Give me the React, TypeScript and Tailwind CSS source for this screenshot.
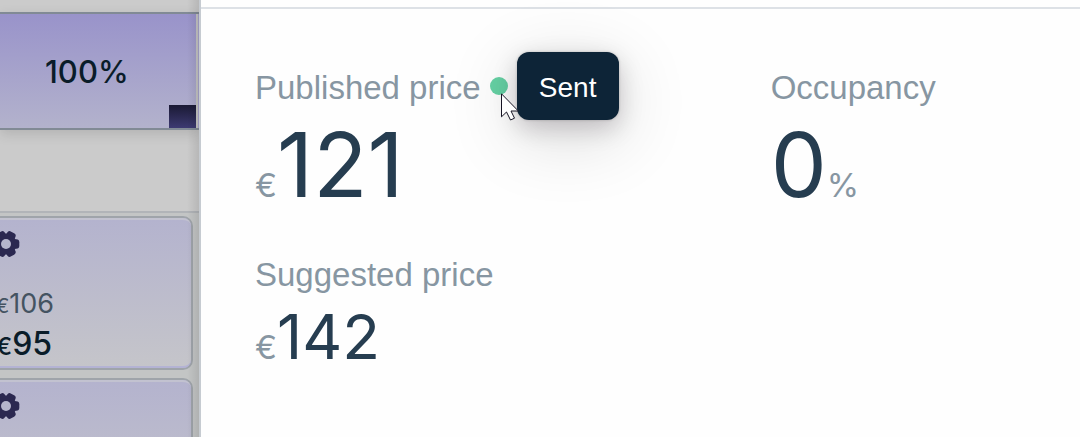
import React from "react";

const LOBES = [0, 60, 120, 180, 240, 300];

function GearIcon() {
  return (
    <svg viewBox="-14 -14 28 28" className="size-7 text-[#2b2850]" aria-hidden="true">
      <g fill="currentColor">
        {LOBES.map((angle) => (
          <rect key={angle} x="3" y="-4.7" width="10.3" height="9.4" rx="3" transform={`rotate(${angle})`} />
        ))}
        <circle r="10.6" />
      </g>
      <circle r="5" className="fill-[#b5b5cc]" />
    </svg>
  );
}

function RateCard({ previous, current }: { previous?: number; current?: number }) {
  return (
    <article className="-ml-5 mr-1.5 h-[154px] shrink-0 rounded-[10px] border-2 border-[#9fa4aa] bg-[#b4b3d0]">
      <div className="flex h-full flex-col rounded-lg border-y-2 border-t-[#c2c2d0] border-b-[#b4b3d4] bg-linear-to-b from-[#b4b3ce] to-[#c5c5ca] pt-2.5 pl-2.5">
        <GearIcon />
        {previous !== undefined && (
          <p className="mt-[30px] pl-1 text-[27px] leading-8 text-[#445361]">
            <span className="text-xl">€</span>{previous}
          </p>
        )}
        {current !== undefined && (
          <p className="mt-1.5 pl-1 text-[32px] leading-9 font-medium text-[#0a1c29]">
            <span className="text-2xl">€</span>{current}
          </p>
        )}
      </div>
    </article>
  );
}

function Metric({ label, children, status }: { label: string; children: React.ReactNode; status?: React.ReactNode }) {
  return (
    <section>
      <div className="flex items-center">
        <h2 className="pt-1 font-['Liberation_Sans',sans-serif] text-[33px] leading-10 whitespace-nowrap text-[#8796a2]">{label}</h2>
        {status}
      </div>
      {children}
    </section>
  );
}

function SentStatus() {
  return (
    <div className="relative ml-[9px] size-[18px] rounded-full bg-[#66d1a4]">
      <div
        role="tooltip"
        className="absolute top-1/2 left-[27px] flex h-[68px] w-[102px] -translate-y-1/2 items-center justify-center rounded-xl bg-[#0d2437] pt-1 font-['Liberation_Sans',sans-serif] text-[28px] text-white shadow-[0_16px_72px_rgba(0,0,0,0.16),0_8px_24px_rgba(20,0,20,0.2),0_0_3px_rgba(0,0,0,0.2)]"
      >
        Sent
      </div>
      <svg viewBox="0 0 19 28" className="absolute top-4 left-[11px] h-7 w-[19px]" aria-hidden="true">
        <path d="M.5 .8v23l5-4.8 4 8 4-1.8-3.5-7.2h7.3z" fill="white" stroke="#161423" />
      </svg>
    </div>
  );
}

export default function App() {
  return (
    <div className="flex h-screen overflow-hidden bg-white font-['Inter',sans-serif]">
      <aside className="relative flex w-[201px] shrink-0 flex-col overflow-hidden border-r-2 border-[#c6cbd1] bg-[#cbcbcb]">
        <div className="mt-3 flex h-[118px] shrink-0 border-y-2 border-[#818a95] bg-[#a8a4cc] shadow-[0_4px_12px_rgba(0,0,0,0.12)]">
          <div className="flex flex-1 items-center bg-linear-to-b from-[#9993ca] to-[#b3b2cc]">
            <p className="flex-1 pt-0.5 pl-[45px] text-[31px] font-medium text-[#0a1c29]">100%</p>
            <div className="h-[23px] w-[27px] self-end bg-linear-to-b from-[#1b1a35] to-[#3d3a72]" />
          </div>
          <div className="mr-px w-0.5 bg-[#c4c4c4]" />
        </div>
        <div className="mt-[81px] flex flex-col gap-2 border-t-2 border-[#b1b4b8] bg-[#c3c5c5] pt-[3px]">
          <RateCard previous={106} current={95} />
          <RateCard />
        </div>
        <div className="pointer-events-none absolute inset-y-0 right-0 w-3 bg-linear-to-r from-transparent to-black/10" />
      </aside>
      <main className="min-w-0 flex-1 bg-[#fefefe] pt-[7px]">
        <div className="grid grid-cols-[5fr_3fr] border-t-2 border-[#dde1e6] pt-[55px] pl-[54px]">
          <div className="flex flex-col gap-5">
            <Metric label="Published price" status={<SentStatus />}>
              <p className="mt-[11px] text-[89px] leading-[92px] text-[#263d50]">
                <span className="text-[33px] text-[#8796a2]">€</span>121
              </p>
            </Metric>
            <Metric label="Suggested price">
              <p className="mt-[11px] text-[62px] leading-[62px] text-[#263d50]">
                <span className="text-[33px] text-[#8796a2]">€</span>142
              </p>
            </Metric>
          </div>
          <Metric label="Occupancy">
            <p className="mt-[11px] text-[89px] leading-[92px] text-[#263d50]">
              0<span className="text-[33px] text-[#8796a2]">%</span>
            </p>
          </Metric>
        </div>
      </main>
    </div>
  );
}
